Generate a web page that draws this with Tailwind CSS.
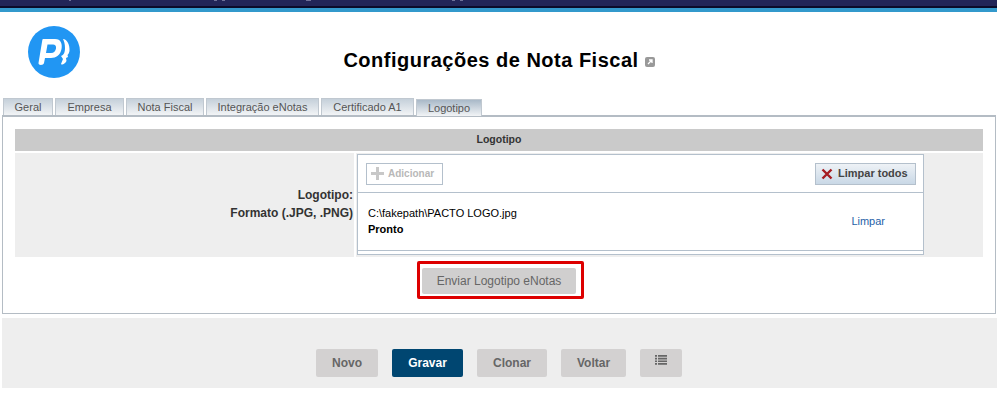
<!DOCTYPE html>
<html lang="en">
<head>
    <meta charset="UTF-8">
    <title>Configurações de Nota Fiscal</title>
    <script src="https://cdn.jsdelivr.net/npm/@tailwindcss/browser@4"></script>
</head>
<body class="bg-white font-['Liberation_Sans',Arial,sans-serif] text-[12px] text-[#333] h-[415px] overflow-hidden">

    <!-- top bar, only the feet of the menu text are left in view -->
    <div class="h-[6px] bg-[#222558] flex items-start">
        <div class="ml-[69px] w-[2px] h-[1px] bg-[#6f7199]"></div>
        <div class="ml-[143px] w-[3px] h-[1px] bg-[#6f7199]"></div>
        <div class="ml-[5px] w-[3px] h-[1px] bg-[#6f7199]"></div>
        <div class="ml-[81px] w-[5px] h-[1px] bg-[#6f7199]"></div>
        <div class="ml-[141px] w-[3px] h-[1px] bg-[#6f7199]"></div>
        <div class="ml-[5px] w-[3px] h-[1px] bg-[#6f7199]"></div>
    </div>
    <div class="h-[2px] bg-[#0b0b2a]"></div>
    <div class="h-[4px] bg-[#3399cc]"></div>

    <!-- header -->
    <div class="h-[86px] relative flex pl-[28px] pt-[14px]">
        <svg width="52" height="52" viewBox="0 0 52 52">
            <circle cx="26" cy="26" r="26" fill="#2196f3"/>
            <path d="M15 13H27C33 13 34.500 18 33.500 23C32.500 29 28 32 23 32H17L16 37C15.700 39.500 10 39.500 10.500 37L14 16C14.300 14 14.500 13 15 13ZM19.500 18.500L18 27H23C26 27 27.500 25 28 22.500C28.500 20 27 18.500 25 18.500Z" fill="#fff" fill-rule="evenodd"/>
            <path d="M35 13C39 13 42 19 41.500 25C41 27 40.500 28 39.500 29L40 31L38 32L38.500 35C37 38 34 39.500 33 38L35 33L33 30C36 29 37 26 37 22C37 18 36 15 35 13Z" fill="#fff"/>
        </svg>
        <div class="absolute left-0 right-0 top-[34px] flex justify-center items-center pl-[1px]">
            <h1 class="text-[20px] leading-[28px] font-bold text-black tracking-[0.5px]">Configurações de Nota Fiscal</h1>
            <svg class="ml-[6px] mt-[4px]" width="10" height="10" viewBox="0 0 10 10">
                <rect width="10" height="10" rx="2" fill="#999"/>
                <path d="M3 7l3.500-3.500M4 3h3v3" stroke="#fff" stroke-width="1.300" fill="none"/>
            </svg>
        </div>
    </div>

    <!-- tabs -->
    <div class="flex pl-[3px] gap-[2px] h-[17px] items-start text-[#555] text-[11px]">
        <div class="w-[50px] h-[17px] border border-b-0 border-[#c0c8d0] bg-gradient-to-b from-[#c5d0da] to-[#f2f4f6] flex items-center justify-center">Geral</div>
        <div class="w-[69px] h-[17px] border border-b-0 border-[#c0c8d0] bg-gradient-to-b from-[#c5d0da] to-[#f2f4f6] flex items-center justify-center">Empresa</div>
        <div class="w-[78px] h-[17px] border border-b-0 border-[#c0c8d0] bg-gradient-to-b from-[#c5d0da] to-[#f2f4f6] flex items-center justify-center">Nota Fiscal</div>
        <div class="w-[113px] h-[17px] border border-b-0 border-[#c0c8d0] bg-gradient-to-b from-[#c5d0da] to-[#f2f4f6] flex items-center justify-center">Integração eNotas</div>
        <div class="w-[93px] h-[17px] border border-b-0 border-[#c0c8d0] bg-gradient-to-b from-[#c5d0da] to-[#f2f4f6] flex items-center justify-center">Certificado A1</div>
        <div class="mt-[1px] w-[66px] h-[17px] border border-b-0 border-[#c0c8d0] bg-gradient-to-b from-[#a9b9c8] to-[#f2f4f6] flex items-center justify-center">Logotipo</div>
    </div>

    <!-- panel -->
    <div class="mx-[2px] w-[994px] h-[199px] border border-t-2 border-[#b4bcc4] pt-[12px] pl-[12px] pr-[12px]">
        <div class="h-[22px] bg-[#cacaca] flex items-center justify-center font-bold text-[10.500px]">Logotipo</div>
        <div class="mt-[2px] h-[104px] flex">
            <div class="w-[339px] pr-[1px] bg-[#eeeeee] flex flex-col items-end justify-center font-bold leading-[18px] text-[12px] text-[#333] pb-[2px]">
                <span>Logotipo:</span>
                <span>Formato (.JPG, .PNG)</span>
            </div>
            <div class="flex-1 ml-[2px] bg-[#eeeeee] pt-[1px] pl-[1px]">
                <div class="w-[567px] h-[101px] bg-white border border-[#b4c0cc]">
                    <div class="h-[38px] border-b border-[#b4c0cc] flex items-center justify-between pl-[8px] pr-[7px]">
                        <div class="w-[77px] h-[22px] border border-[#b4c0cc] flex items-center pl-[4px] text-[#b8b8b8] font-bold text-[10px]">
                            <svg width="13" height="13" viewBox="0 0 13 13"><path d="M5 0h3v5h5v3H8v5H5V8H0V5h5z" fill="#c8c8c8"/></svg>
                            <span class="ml-[4px]">Adicionar</span>
                        </div>
                        <div class="w-[101px] h-[22px] border border-[#b4c0cc] bg-gradient-to-b from-[#eef2f6] to-[#c9d8e6] flex items-center pl-[5px] text-[#444] font-bold text-[11px]">
                            <svg width="12" height="12" viewBox="0 0 12 12"><path d="M1.500 1.500l9 9M10.500 1.500l-9 9" stroke="#a61c22" stroke-width="2.400"/></svg>
                            <span class="ml-[5px]">Limpar todos</span>
                        </div>
                    </div>
                    <div class="h-[58px] border-b border-[#b4c0cc] flex justify-between pl-[10px] pr-[38px] pt-[12px] text-[11px] text-black">
                        <div class="leading-[16px]">
                            <div>C:\fakepath\PACTO LOGO.jpg</div>
                            <div class="font-bold">Pronto</div>
                        </div>
                        <a class="text-[#1f62a8] mt-[8px] leading-[16px]">Limpar</a>
                    </div>
                </div>
            </div>
        </div>
        <div class="mt-[4px] ml-[402px] w-fit border-[3px] border-[#dd0000] rounded-[2px] pt-[4px] pb-[2px] pl-[2px] pr-[5px]">
            <div class="w-[154px] h-[26px] bg-[#d0cfcf] rounded-[2px] flex items-center justify-center text-[#666] text-[12px]">Enviar Logotipo eNotas</div>
        </div>
    </div>

    <!-- footer -->
    <div class="mt-[4px] ml-[2px] h-[70px] bg-[#eeeeee] flex justify-start gap-[14px] pl-[314px] pt-[31px] font-bold text-[12px] text-[#666]">
        <div class="w-[62px] h-[28px] rounded-[2px] bg-[#d3d1d1] flex items-center justify-center">Novo</div>
        <div class="w-[71px] h-[28px] rounded-[2px] bg-[#004671] text-white flex items-center justify-center">Gravar</div>
        <div class="w-[70px] h-[28px] rounded-[2px] bg-[#d3d1d1] flex items-center justify-center">Clonar</div>
        <div class="w-[65px] h-[28px] rounded-[2px] bg-[#d3d1d1] flex items-center justify-center">Voltar</div>
        <div class="w-[42px] h-[28px] rounded-[2px] bg-[#d3d1d1] flex justify-center pt-[6px]">
            <svg width="12" height="10" viewBox="0 0 12 10" fill="#666">
                <path d="M0 0h2v1.700H0zM3 0h9v1.700H3zM0 2.700h2v1.700H0zM3 2.700h9v1.700H3zM0 5.400h2v1.700H0zM3 5.400h9v1.700H3zM0 8.100h2v1.700H0zM3 8.100h9v1.700H3z"/>
            </svg>
        </div>
    </div>

</body>
</html>
